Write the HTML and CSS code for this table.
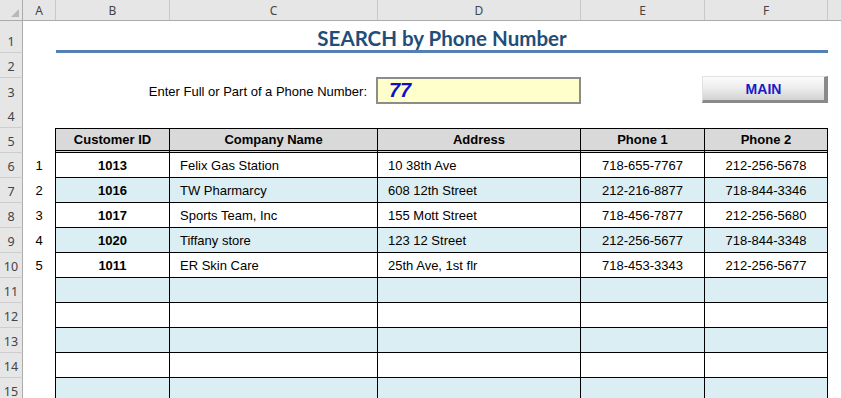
FILE: index.html
```html
<!DOCTYPE html>
<html>
<head>
<meta charset="utf-8">
<link rel="stylesheet" href="styles.css">
</head>
<body>
<div class="sheet">
  <div class="row colhead">
    <div class="ch corner"><span class="tri"></span></div>
    <div class="ch">A</div>
    <div class="ch">B</div>
    <div class="ch">C</div>
    <div class="ch">D</div>
    <div class="ch">E</div>
    <div class="ch">F</div>
    <div class="ch last"></div>
  </div>

  <div class="row r1">
    <div class="rh">1</div>
    <div></div>
    <div class="title">SEARCH by Phone Number</div>
    <div></div>
  </div>

  <div class="row">
    <div class="rh">2</div>
  </div>

  <div class="row">
    <div class="rh">3</div>
    <div></div>
    <div class="label">Enter Full or Part of a Phone Number:</div>
    <div class="inputbox">77</div>
    <div></div>
    <div class="btncell"><div class="btn">MAIN</div></div>
    <div></div>
  </div>

  <div class="row">
    <div class="rh">4</div>
  </div>

  <div class="row thead">
    <div class="rh">5</div>
    <div class="a"></div>
    <div class="c">Customer ID</div>
    <div class="c">Company Name</div>
    <div class="c">Address</div>
    <div class="c">Phone 1</div>
    <div class="c">Phone 2</div>
    <div></div>
  </div>

  <div class="row data">
    <div class="rh">6</div>
    <div class="a">1</div>
    <div class="c id">1013</div>
    <div class="c txt">Felix Gas Station</div>
    <div class="c txt">10 38th Ave</div>
    <div class="c">718-655-7767</div>
    <div class="c">212-256-5678</div>
    <div></div>
  </div>

  <div class="row data alt">
    <div class="rh">7</div>
    <div class="a">2</div>
    <div class="c id">1016</div>
    <div class="c txt">TW Pharmarcy</div>
    <div class="c txt">608 12th Street</div>
    <div class="c">212-216-8877</div>
    <div class="c">718-844-3346</div>
    <div></div>
  </div>

  <div class="row data">
    <div class="rh">8</div>
    <div class="a">3</div>
    <div class="c id">1017</div>
    <div class="c txt">Sports Team, Inc</div>
    <div class="c txt">155 Mott Street</div>
    <div class="c">718-456-7877</div>
    <div class="c">212-256-5680</div>
    <div></div>
  </div>

  <div class="row data alt">
    <div class="rh">9</div>
    <div class="a">4</div>
    <div class="c id">1020</div>
    <div class="c txt">Tiffany store</div>
    <div class="c txt">123 12 Street</div>
    <div class="c">212-256-5677</div>
    <div class="c">718-844-3348</div>
    <div></div>
  </div>

  <div class="row data">
    <div class="rh">10</div>
    <div class="a">5</div>
    <div class="c id">1011</div>
    <div class="c txt">ER Skin Care</div>
    <div class="c txt">25th Ave, 1st flr</div>
    <div class="c">718-453-3343</div>
    <div class="c">212-256-5677</div>
    <div></div>
  </div>

  <div class="row data alt">
    <div class="rh">11</div>
    <div class="a"></div>
    <div class="c"></div><div class="c"></div><div class="c"></div><div class="c"></div><div class="c"></div>
    <div></div>
  </div>

  <div class="row data">
    <div class="rh">12</div>
    <div class="a"></div>
    <div class="c"></div><div class="c"></div><div class="c"></div><div class="c"></div><div class="c"></div>
    <div></div>
  </div>

  <div class="row data alt">
    <div class="rh">13</div>
    <div class="a"></div>
    <div class="c"></div><div class="c"></div><div class="c"></div><div class="c"></div><div class="c"></div>
    <div></div>
  </div>

  <div class="row data">
    <div class="rh">14</div>
    <div class="a"></div>
    <div class="c"></div><div class="c"></div><div class="c"></div><div class="c"></div><div class="c"></div>
    <div></div>
  </div>

  <div class="row data alt">
    <div class="rh">15</div>
    <div class="a"></div>
    <div class="c"></div><div class="c"></div><div class="c"></div><div class="c"></div><div class="c"></div>
    <div></div>
  </div>
</div>
</body>
</html>
```

FILE: styles.css
```css
* { box-sizing: border-box; }
html, body { margin: 0; padding: 0; background: #fff; }
body { font-family: "Liberation Sans", Arial, sans-serif; font-size: 13px; color: #000; }

.sheet { width: 841px; height: 398px; overflow: hidden; }

.row {
  display: grid;
  grid-template-columns: 23px 33px 114px 208px 203px 124px 123px 13px;
  height: 25px;
}

/* column header */
.colhead { height: 21px; background: #e6e6e6; border-bottom: 1px solid #ababab; }
.ch {
  display: flex; align-items: center; justify-content: center;
  font-family: "Noto Sans", "Open Sans", sans-serif; font-size: 12px; color: #444;
  border-right: 1px solid #c9c9c9;
  padding-top: 1px;
}
.ch.last { border-right: none; }
.corner { position: relative; border-right: 1px solid #ababab; }
.tri {
  position: absolute; right: 3px; bottom: 3px;
  width: 0; height: 0;
  border-left: 8px solid transparent;
  border-bottom: 8px solid #b8b8b8;
}

/* row header */
.rh {
  grid-column: 1;
  background: #e6e6e6;
  border-right: 1px solid #ababab;
  border-bottom: 1px solid #cdcdcd;
  display: flex; align-items: flex-end; justify-content: center;
  font-family: "Noto Sans", "Open Sans", sans-serif; font-size: 12.5px; color: #444;
  padding-bottom: 3px; line-height: 14px;
}

.r1 { height: 32px; }
.title {
  grid-column: 3 / 8;
  border-bottom: 3px solid #5580b4;
  text-align: center;
  font-family: Lato, "Open Sans", sans-serif; font-weight: bold; font-size: 20.5px;
  color: #1f4e79;
  padding-top: 6px;
  line-height: 22px;
}

.label {
  grid-column: 3 / 5;
  display: flex; align-items: center; justify-content: flex-end;
  padding-right: 11px; font-size: 13px; padding-top: 1px;
}
.inputbox {
  grid-column: 5;
  background: #ffffcc;
  border: 2px solid #8c8c88;
  margin: -1px 0 0 -2px;
  display: flex; align-items: center;
  padding-left: 11px;
  font-weight: bold; font-style: italic; font-size: 20px; color: #1010c8;
}
.btncell { grid-column: 7; }
.btn {
  height: 27px;
  margin: -2px 0 0 -3px;
  background: linear-gradient(#fbfbfb, #eeeeee 45%, #d2d2d2);
  border-top: 1px solid #e2e2e2;
  border-left: 1px solid #e2e2e2;
  border-right: 4px solid #8a8a8a;
  border-bottom: 3px solid #8a8a8a;
  display: flex; align-items: center; justify-content: center;
  font-weight: bold; font-size: 14px; color: #1a1ac8;
  padding-top: 1px;
}

/* table */
.a {
  border-right: 1px solid #000;
  display: flex; align-items: center; justify-content: center;
}
.c {
  border-right: 1px solid #000;
  border-bottom: 1px solid #000;
  display: flex; align-items: center; justify-content: center;
  white-space: nowrap;
}
.thead .c {
  background: #d9d9d9;
  border-top: 1px solid #000;
  border-bottom: 3px double #000;
  font-weight: bold;
}
.data .id { font-weight: bold; }
.data .txt { justify-content: flex-start; padding-left: 10px; }
.alt .c { background: #daeef3; }
```
